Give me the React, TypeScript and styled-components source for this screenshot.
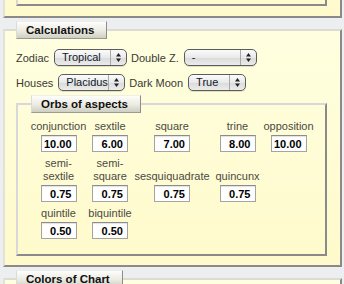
import React from 'react'
import styled, { createGlobalStyle } from 'styled-components'

const GlobalStyle = createGlobalStyle`
  html, body {
    margin: 0;
    padding: 0;
    background: #eceef0;
    overflow: hidden;
  }
  body {
    font-family: "Liberation Sans", Arial, Helvetica, sans-serif;
    font-size: 11px;
    color: #333;
  }
`

const Page = styled.div`
  display: flex;
  flex-direction: column;
  gap: 3px;
  margin-top: -50px;
  padding: 0 2px 0 3px;
`

const panelSkin = `
  border: 2px solid;
  border-color: #dcdcd4 #8a8a8a #8a8a8a #e2e2da;
  background: linear-gradient(#ffffe0, #fffacb);
`

const PrevPanel = styled.div`
  ${panelSkin}
  padding: 4px 13px 10px 11px;
`

const PrevBox = styled.div`
  height: 50px;
  box-sizing: border-box;
  border: 2px solid;
  border-color: #d8d8d8 #8a8a8a #8a8a8a #d8d8d8;
`

const Panel = styled.fieldset<{ $tall?: boolean }>`
  ${panelSkin}
  margin: 0;
  min-width: 0;
  padding: 10px 13px 9px 11px;
  min-height: ${p => (p.$tall ? '120px' : 'auto')};
`

const Tab = styled.legend<{ $indent?: number }>`
  box-sizing: border-box;
  height: 18px;
  margin-left: ${p => p.$indent ?? 0}px;
  padding: 0 12px 0 9px;
  line-height: 16px;
  font-size: 11.5px;
  font-weight: bold;
  color: #111;
  background: linear-gradient(#fdfdfb, #ecebe2 55%, #cfcec2);
  border: 1px solid;
  border-color: #eeeeea #8c8c8c #9a9a94 #dcdcd6;
`

const Rows = styled.div`
  display: flex;
  flex-direction: column;
  gap: 8px;
`

const Row = styled.div`
  display: flex;
  align-items: center;
  gap: 4px;
  height: 17px;
`

const Label = styled.span`
  color: #3a3a36;
  white-space: nowrap;
  margin-right: 1px;
`

const SelectBox = styled.div<{ $w: number }>`
  box-sizing: border-box;
  width: ${p => p.$w}px;
  height: 17px;
  display: flex;
  align-items: stretch;
  border: 1px solid #5c5c5c;
  border-radius: 5px;
  background: linear-gradient(#fbfbfb, #e9e9e9 50%, #dadada 52%, #ececec);
  box-shadow: 0 1px 0 rgba(0, 0, 0, 0.12);
  font-size: 11px;
  color: #121a2a;
`

const SelectText = styled.span`
  flex: 1;
  padding-left: 7px;
  line-height: 15px;
  white-space: nowrap;
`

const SelectArrows = styled.span`
  width: 15px;
  flex: none;
  border-left: 1px solid #a8a8a8;
  display: flex;
  align-items: center;
  justify-content: center;
`

const Orbs = styled.fieldset`
  margin: 4px 0 0;
  min-width: 0;
  padding: 7px 0 15px;
  border: 2px solid;
  border-color: #d8d8d8 #8a8a8a #8a8a8a #d8d8d8;
`

const OrbGrid = styled.div`
  display: grid;
  grid-template-columns: 55px 40px 76px 47px 47px;
  column-gap: 4px;
  row-gap: 5px;
  justify-content: center;
`

const OrbCell = styled.div<{ $newRow?: boolean }>`
  display: flex;
  flex-direction: column;
  justify-content: flex-end;
  align-items: center;
  text-align: center;
  grid-column-start: ${p => (p.$newRow ? 1 : 'auto')};
`

const OrbName = styled.div`
  line-height: 13px;
  color: #4a4a44;
  margin-bottom: 2px;
`

const OrbInput = styled.input`
  box-sizing: border-box;
  width: 36px;
  height: 17px;
  margin: 0;
  padding: 0 4px 0 0;
  border: 1px solid #a4a4a4;
  border-top-color: #8c8c8c;
  box-shadow: inset 0 1px 1px rgba(0, 0, 0, 0.12);
  background: #fff;
  font-family: "Liberation Sans", Arial, sans-serif;
  font-size: 11px;
  font-weight: bold;
  color: #000;
  text-align: right;
  outline: none;
`

function Select({ value, width }: { value: string; width: number }) {
  return (
    <SelectBox $w={width}>
      <SelectText>{value}</SelectText>
      <SelectArrows>
        <svg width="5" height="9" viewBox="0 0 5 9">
          <polygon points="0,3.5 2.5,0 5,3.5" fill="#222" />
          <polygon points="0,5.5 2.5,9 5,5.5" fill="#222" />
        </svg>
      </SelectArrows>
    </SelectBox>
  )
}

// [name, value, starts a new row]
const orbs: [string, string, boolean][] = [
  ['conjunction', '10.00', true],
  ['sextile', '6.00', false],
  ['square', '7.00', false],
  ['trine', '8.00', false],
  ['opposition', '10.00', false],
  ['semi-sextile', '0.75', true],
  ['semi-square', '0.75', false],
  ['sesquiquadrate', '0.75', false],
  ['quincunx', '0.75', false],
  ['quintile', '0.50', true],
  ['biquintile', '0.50', false],
]

export default function App() {
  return (
    <>
      <GlobalStyle />
      <Page>
        <PrevPanel>
          <PrevBox />
        </PrevPanel>

        <Panel>
          <Tab>Calculations</Tab>
          <Rows>
            <Row>
              <Label>Zodiac</Label>
              <Select value="Tropical" width={73} />
              <Label>Double Z.</Label>
              <Select value="-" width={73} />
            </Row>
            <Row>
              <Label>Houses</Label>
              <Select value="Placidus" width={67} />
              <Label>Dark Moon</Label>
              <Select value="True" width={58} />
            </Row>
          </Rows>
          <Orbs>
            <Tab $indent={13}>Orbs of aspects</Tab>
            <OrbGrid>
              {orbs.map(([name, val, newRow]) => (
                <OrbCell key={name} $newRow={newRow}>
                  <OrbName>{name}</OrbName>
                  <OrbInput defaultValue={val} readOnly />
                </OrbCell>
              ))}
            </OrbGrid>
          </Orbs>
        </Panel>

        <Panel $tall>
          <Tab>Colors of Chart</Tab>
        </Panel>
      </Page>
    </>
  )
}
